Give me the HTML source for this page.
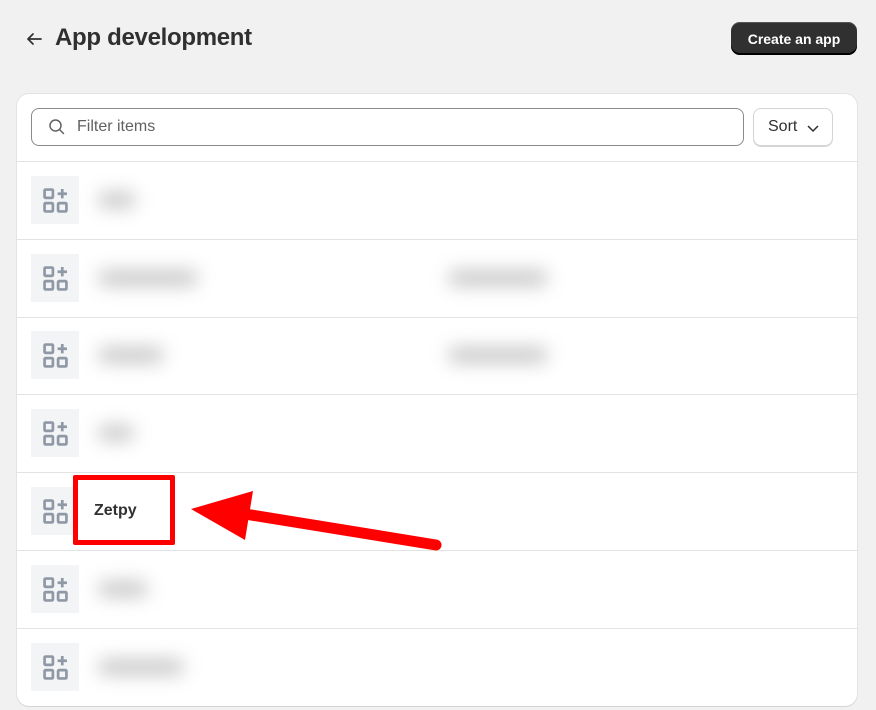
<!DOCTYPE html>
<html><head><style>
*{box-sizing:border-box;margin:0;padding:0}
body{width:876px;height:710px;background:#f1f1f1;font-family:"Liberation Sans",sans-serif;position:relative;overflow:hidden}
.abs{position:absolute}
.card{left:17px;top:94px;width:840px;height:612px;background:#fff;border-radius:12px;box-shadow:0 1px 0 #d4d4d4,0 0 0 1px #e3e3e3}
.row{left:17px;width:840px;border-top:1px solid #e3e3e3}
.ic{left:31px;width:48px;height:48px;background:#f3f4f6;display:flex;align-items:center;justify-content:center}
.blob{background:#b5b5b5;filter:blur(9px);height:16px;border-radius:8px;opacity:.75}
</style></head><body>
<svg class="abs" style="left:24px;top:29px" width="20" height="20" viewBox="0 0 20 20"><path d="M17 10H4M9 5l-5 5 5 5" stroke="#303030" stroke-width="1.7" fill="none" stroke-linecap="round" stroke-linejoin="round"/></svg>
<div class="abs" style="left:55px;top:24px;font-size:24px;font-weight:bold;color:#303030;letter-spacing:-.3px">App development</div>
<div class="abs" style="left:731px;top:22px;width:126px;height:33px;background:#303030;border-radius:9px;color:#fff;font-size:14px;font-weight:bold;display:flex;align-items:center;justify-content:center;box-shadow:inset 0 -2px 0 #000,inset 0 1px 0 #555">Create an app</div>
<div class="abs card"></div>
<div class="abs" style="left:31px;top:108px;width:713px;height:38px;border:1px solid #8a8a8a;border-radius:8px"></div>
<svg class="abs" style="left:48px;top:118px" width="18" height="18" viewBox="0 0 18 18"><circle cx="7.5" cy="7.5" r="5.5" stroke="#616161" stroke-width="1.5" fill="none"/><path d="M11.5 11.5l4 4" stroke="#616161" stroke-width="1.5" stroke-linecap="round"/></svg>
<div class="abs" style="left:77px;top:118px;font-size:16px;color:#616161">Filter items</div>
<div class="abs" style="left:753px;top:108px;width:80px;height:38px;border:1px solid #d4d4d4;border-radius:8px;box-shadow:0 1px 0 #d4d4d4"></div>
<div class="abs" style="left:768px;top:118px;font-size:16px;color:#303030">Sort</div>
<svg class="abs" style="left:806px;top:122px" width="14" height="12" viewBox="0 0 14 12"><path d="M2 4l5 5 5-5" stroke="#303030" stroke-width="1.5" fill="none"/></svg>
<div class="abs row" style="top:161px"></div>
<div class="abs row" style="top:239px"></div>
<div class="abs row" style="top:317px"></div>
<div class="abs row" style="top:394px"></div>
<div class="abs row" style="top:472px"></div>
<div class="abs row" style="top:550px"></div>
<div class="abs row" style="top:628px"></div>
<svg width="0" height="0" style="position:absolute"><defs><g id="g"><rect x="1.5" y="1.5" width="8" height="8" stroke="#8f99a6" stroke-width="2.6" fill="none" rx="1"/><rect x="1.5" y="14.5" width="8" height="8" stroke="#8f99a6" stroke-width="2.6" fill="none" rx="1"/><rect x="14.5" y="14.5" width="8" height="8" stroke="#8f99a6" stroke-width="2.6" fill="none" rx="1"/><path d="M18.5 1v9M14 5.5h9" stroke="#8f99a6" stroke-width="2.6"/></g></defs></svg>
<div class="abs ic" style="top:176px"><svg width="25" height="25" viewBox="0 0 24 24"><use href="#g"/></svg></div>
<div class="abs ic" style="top:254px"><svg width="25" height="25" viewBox="0 0 24 24"><use href="#g"/></svg></div>
<div class="abs ic" style="top:331px"><svg width="25" height="25" viewBox="0 0 24 24"><use href="#g"/></svg></div>
<div class="abs ic" style="top:409px"><svg width="25" height="25" viewBox="0 0 24 24"><use href="#g"/></svg></div>
<div class="abs ic" style="top:487px"><svg width="25" height="25" viewBox="0 0 24 24"><use href="#g"/></svg></div>
<div class="abs ic" style="top:565px"><svg width="25" height="25" viewBox="0 0 24 24"><use href="#g"/></svg></div>
<div class="abs ic" style="top:643px"><svg width="25" height="25" viewBox="0 0 24 24"><use href="#g"/></svg></div>
<div class="abs blob" style="left:98px;top:192px;width:38px"></div>
<div class="abs blob" style="left:98px;top:270px;width:100px"></div>
<div class="abs blob" style="left:448px;top:270px;width:100px"></div>
<div class="abs blob" style="left:98px;top:347px;width:66px"></div>
<div class="abs blob" style="left:448px;top:347px;width:100px"></div>
<div class="abs blob" style="left:98px;top:425px;width:36px"></div>
<div class="abs blob" style="left:98px;top:581px;width:50px"></div>
<div class="abs blob" style="left:98px;top:659px;width:86px"></div>
<div class="abs" style="left:73px;top:475px;width:102px;height:70px;border:5px solid #f00;border-radius:2px;background:#fff"></div>
<div class="abs" style="left:94px;top:502px;font-size:16px;font-weight:bold;color:#303030">Zetpy</div>
<svg class="abs" style="left:0;top:0" width="876" height="710"><path d="M436 545L245 514" stroke="#f00" stroke-width="11" stroke-linecap="round"/><path d="M191 509L253 491L245 540Z" fill="#f00"/></svg>
</body></html>
